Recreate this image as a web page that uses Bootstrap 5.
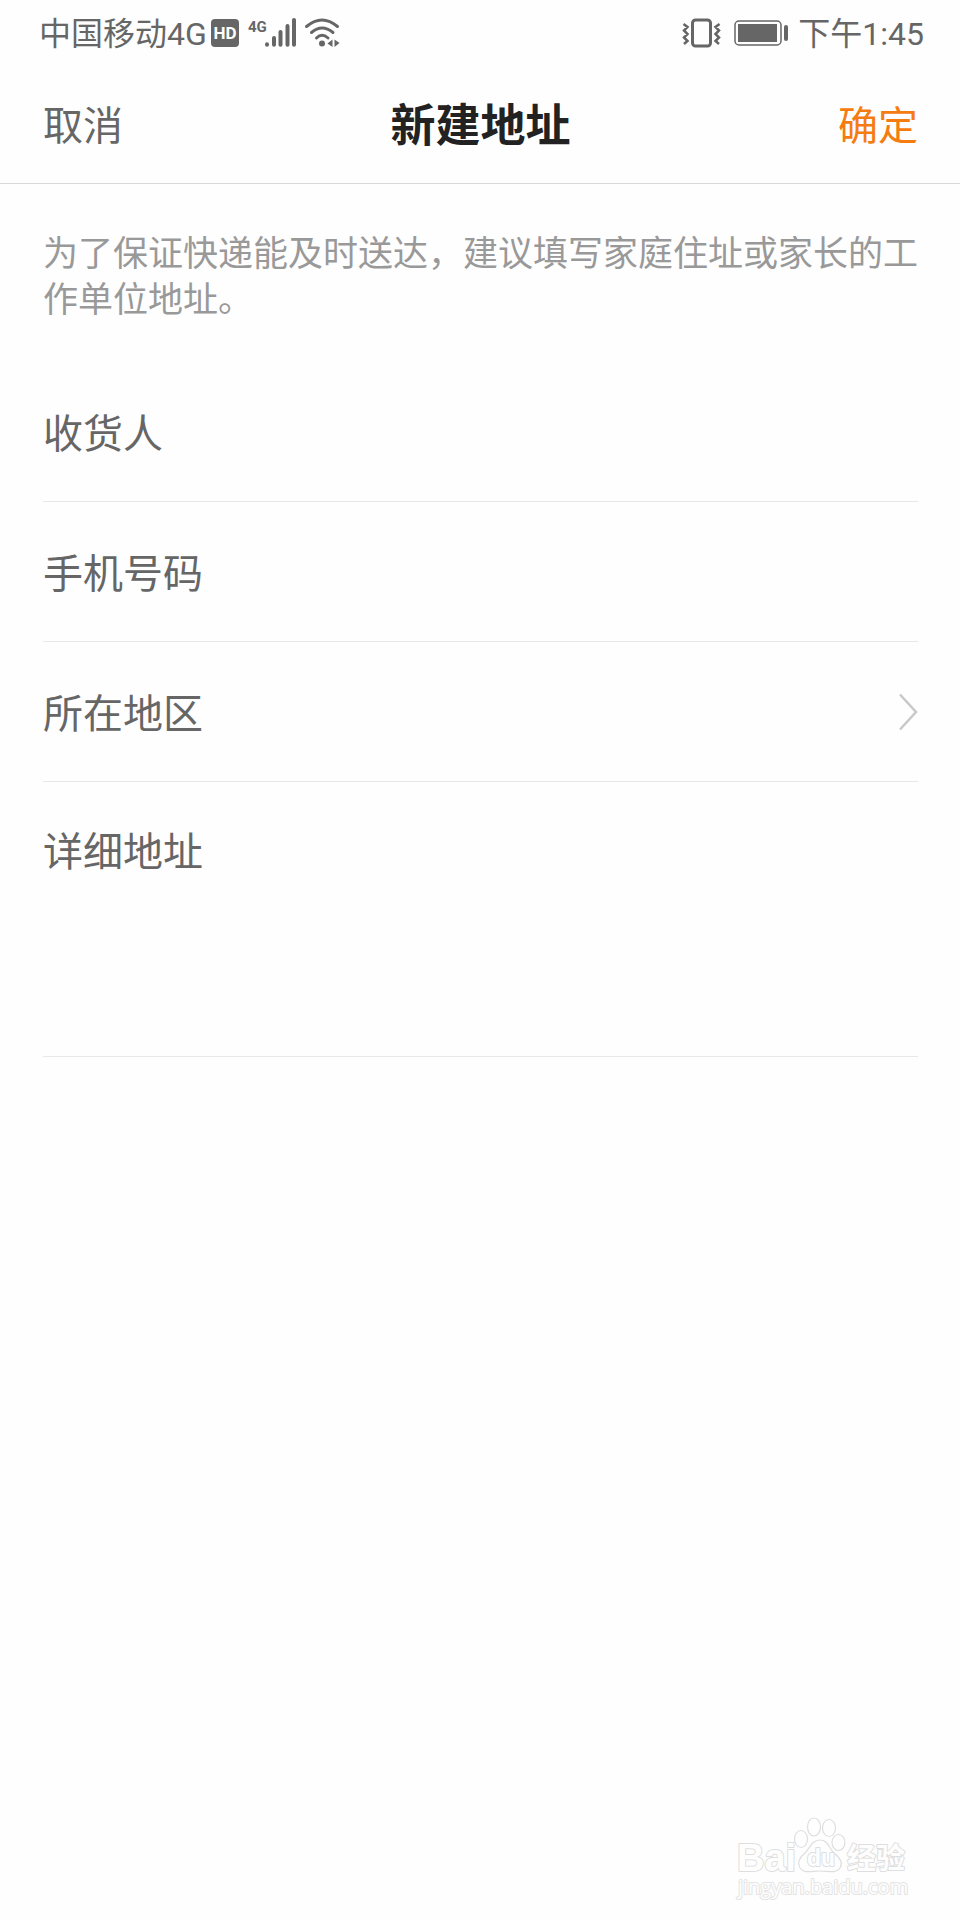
<!DOCTYPE html>
<html lang="zh-CN">
<head>
<meta charset="utf-8">
<meta name="viewport" content="width=device-width, initial-scale=1">
<title>新建地址</title>
<link href="https://cdn.jsdelivr.net/npm/bootstrap@5.3.0/dist/css/bootstrap.min.css" rel="stylesheet">
<style>
  body { background: #fefefe; color: #666; font-family: Roboto, "Noto Sans CJK SC", sans-serif; font-size: 40px; }
  .status-bar { height: 66px; padding: 0 36px 0 39px; font-size: 32px; line-height: 48px; }
  .status-bar svg { display: block; flex: none; overflow: visible; }
  .status-bar span { padding-top: 2px; }
  .signal-icon { margin-left: 10px; }
  .battery-icon { margin: 0 9px 0 13px; }
  .title-bar { height: 118px; padding: 5px 42px 0 43px; border-bottom: 1px solid #d8d8d8; }
  .title-bar h1 { font-size: 45px; color: #222; }
  .bar-btn { font-size: 40px; line-height: 60px; color: #666; border: 0; background: none; }
  .bar-btn.confirm { color: #f57c10; }
  .page-body { padding: 0 42px 0 43px; }
  .tip { padding: 48px 0 38px; font-size: 35px; line-height: 46px; color: #999; }
  .field-row { min-height: 140px; border-bottom: 1px solid #e8e8e8; }
  .field-row label { flex: none; padding-top: 6px; line-height: 60px; }
  .field-row.tall { min-height: 275px; padding-top: 35px; }
  .field-ctl { border: 0; background: none; font-size: 40px; line-height: 60px; color: #333; outline: 0; min-width: 0; resize: none; }
  .watermark { padding: 0 48px 14px; }
</style>
</head>
<body>
<div class="min-vh-100 d-flex flex-column">
  <div class="status-bar d-flex align-items-center justify-content-between">
    <div class="d-flex align-items-center">
      <span>中国移动4G</span>
      <svg class="ms-1" width="28" height="30" viewBox="0 0 28 30" aria-hidden="true">
        <rect x="0" y="1" width="28" height="28" rx="4" fill="#666"/>
        <text x="14" y="21" text-anchor="middle" font-family="Roboto, sans-serif" font-weight="700" font-size="17" fill="#fefefe">HD</text>
      </svg>
      <svg class="signal-icon" width="48" height="30" viewBox="0 0 48 30" aria-hidden="true">
        <text x="-1" y="14" font-family="Roboto, sans-serif" font-weight="700" font-size="15" fill="#666">4G</text>
        <g stroke="#666" stroke-width="4" stroke-linecap="round">
          <path d="M18 26.200V26.800M25 20V26.800M31.500 14V26.800M38.500 8V26.800M45 2V26.800"/>
        </g>
      </svg>
      <svg class="ms-2" width="36" height="30" viewBox="0 0 36 30" aria-hidden="true">
        <g fill="none" stroke="#666" stroke-width="3" stroke-linecap="round">
          <path d="M1.500 8.500Q17 -4.500 32.500 8.500"/>
          <path d="M6.500 14.500Q17 5.500 28 14.500"/>
          <path d="M11.500 20Q17 14.500 23 20"/>
        </g>
        <circle cx="17" cy="25.500" r="3" fill="#666"/>
        <path d="M27.500 21.500V29L22.500 25.500ZM29.500 21.500L34.500 25L29.500 29Z" fill="#666"/>
      </svg>
    </div>
    <div class="d-flex align-items-center">
      <svg width="39" height="30" viewBox="0 0 39 30" aria-hidden="true">
        <rect x="10.500" y="2" width="18" height="26" rx="3" fill="none" stroke="#666" stroke-width="3"/>
        <path d="M1.500 6L5.500 9L2 12.500L5.500 16L2 19.500L5.500 23L2 26M37.500 6L33.500 9L37 12.500L33.500 16L37 19.500L33.500 23L37 26" fill="none" stroke="#666" stroke-width="2.500"/>
      </svg>
      <svg class="battery-icon" width="55" height="30" viewBox="0 0 55 30" aria-hidden="true">
        <rect x="1" y="3" width="46" height="24" rx="4" fill="none" stroke="#666" stroke-width="1.500"/>
        <rect x="4" y="6" width="39" height="18" fill="#666"/>
        <rect x="50" y="7" width="4" height="16" rx="2" fill="#666"/>
      </svg>
      <span>下午1:45</span>
    </div>
  </div>

  <header class="title-bar d-flex align-items-center justify-content-between">
    <button type="button" class="bar-btn p-0">取消</button>
    <h1 class="m-0 fw-bold">新建地址</h1>
    <button type="submit" form="address-form" class="bar-btn confirm p-0">确定</button>
  </header>

  <main class="page-body">
    <p class="tip m-0">为了保证快递能及时送达，建议填写家庭住址或家长的工作单位地址。</p>
    <form id="address-form">
      <div class="field-row d-flex align-items-center gap-3">
        <label for="receiver">收货人</label>
        <input id="receiver" type="text" class="field-ctl flex-grow-1 p-0">
      </div>
      <div class="field-row d-flex align-items-center gap-3">
        <label for="phone">手机号码</label>
        <input id="phone" type="tel" class="field-ctl flex-grow-1 p-0">
      </div>
      <div class="field-row d-flex align-items-center gap-3">
        <label for="region">所在地区</label>
        <button id="region" type="button" class="field-ctl flex-grow-1 p-0 d-flex justify-content-end">
          <svg width="19" height="40" viewBox="0 0 19 40" aria-hidden="true"><path d="M1 2.500L17 20L1 37.500" fill="none" stroke="#c8c8c8" stroke-width="2.500"/></svg>
        </button>
      </div>
      <div class="field-row tall d-flex align-items-start gap-3">
        <label for="detail">详细地址</label>
        <textarea id="detail" rows="3" class="field-ctl flex-grow-1 p-0"></textarea>
      </div>
    </form>
  </main>

  <footer class="watermark mt-auto d-flex justify-content-end">
    <svg width="180" height="90" viewBox="0 0 180 90" role="img" aria-label="Baidu 经验">
      <g fill="#fefefe" stroke="#dedede" stroke-width="1.200" stroke-linejoin="round">
        <text x="5" y="55" font-family="'Liberation Sans', sans-serif" font-weight="700" font-size="38" stroke-width="2" paint-order="stroke">Bai</text>
        <ellipse cx="69" cy="23" rx="6.500" ry="8.500"/>
        <ellipse cx="82" cy="11" rx="6.500" ry="9"/>
        <ellipse cx="97" cy="12" rx="6.500" ry="8.500"/>
        <ellipse cx="106.500" cy="26.500" rx="6.500" ry="8"/>
        <path d="M88 24C80 24 78 32 73 37C67 42 65 47 68 52C72 58 80 55 88 55C96 55 104 58 108 52C112 46 107 41 102 37C97 32 96 24 88 24Z"/>
        <text x="75" y="50" font-family="'Liberation Sans', sans-serif" font-weight="700" font-size="23" stroke-width="2" paint-order="stroke">du</text>
        <text x="115" y="53" font-family="'Noto Sans CJK SC', sans-serif" font-weight="700" font-size="29" stroke-width="2" paint-order="stroke">经验</text>
        <text x="6" y="78" font-family="'Open Sans', sans-serif" font-size="20" stroke-width="2" stroke="#e4e4e4" paint-order="stroke">jingyan.baidu.com</text>
      </g>
    </svg>
  </footer>
</div>
<script src="https://cdn.jsdelivr.net/npm/bootstrap@5.3.0/dist/js/bootstrap.bundle.min.js"></script>
</body>
</html>
